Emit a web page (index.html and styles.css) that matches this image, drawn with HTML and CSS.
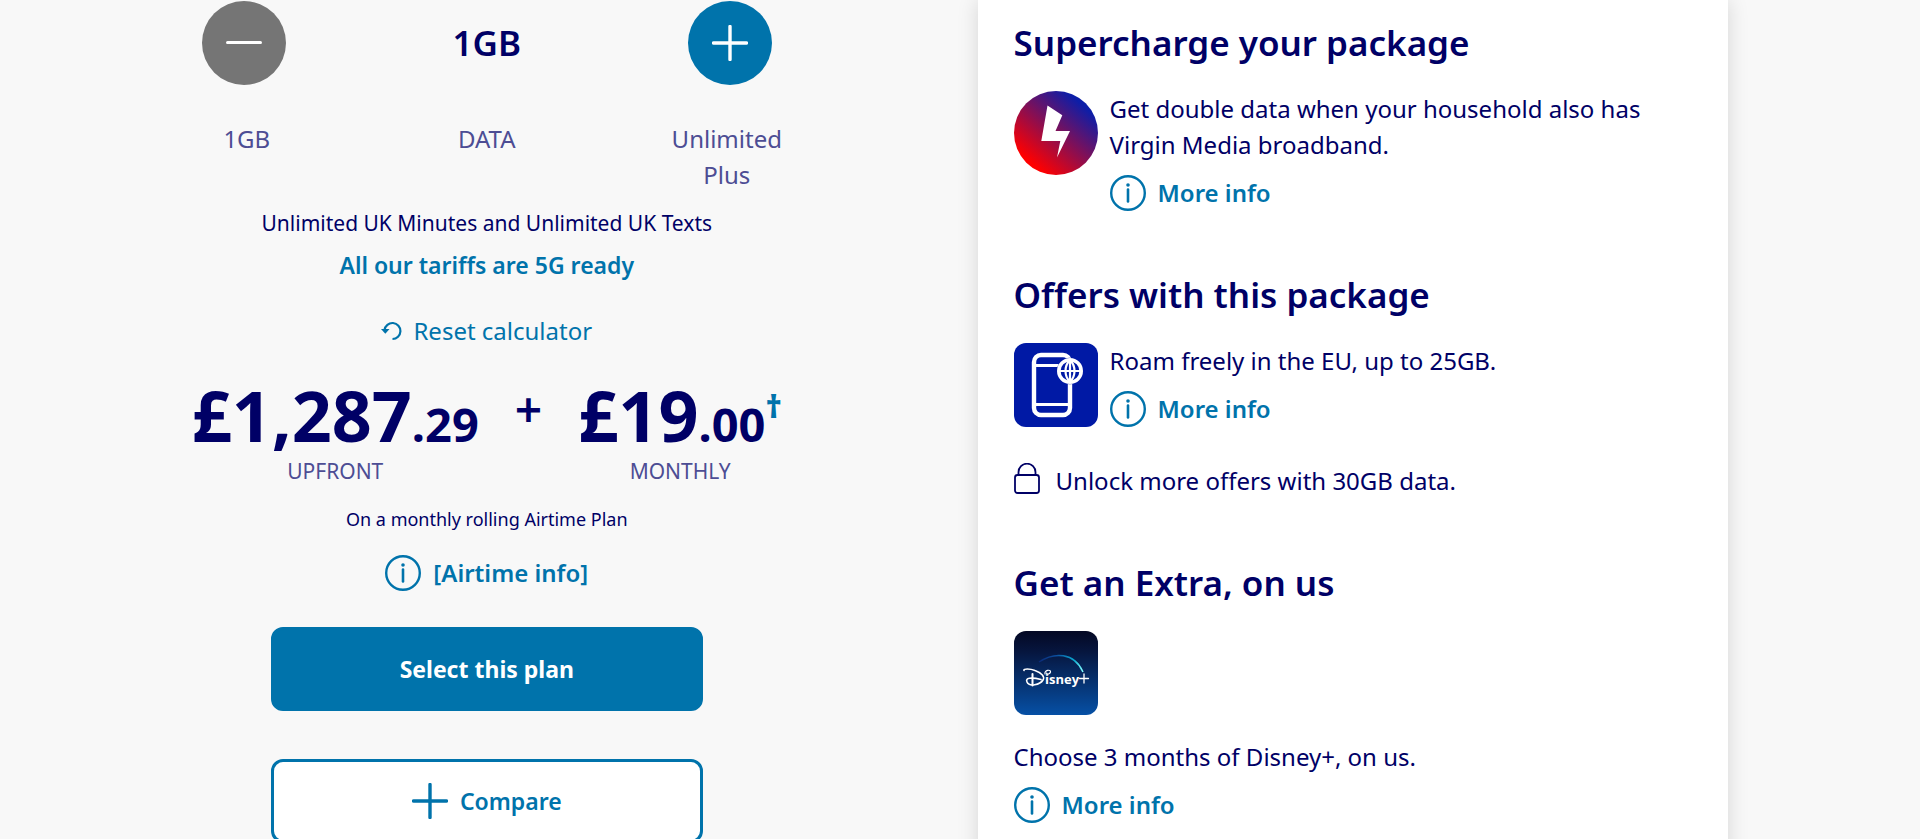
FILE: index.html
```html
<!DOCTYPE html>
<html lang="en">
<head>
<meta charset="utf-8">
<meta name="viewport" content="width=device-width, initial-scale=1">
<title>Build your plan</title>
<link rel="stylesheet" href="styles.css">
</head>
<body>
<svg class="defs" aria-hidden="true">
  <symbol id="info" viewBox="0 0 36 36">
    <circle cx="18" cy="18" r="16.8" fill="none" stroke="currentColor" stroke-width="2.4"/>
    <circle cx="18" cy="10" r="1.8" fill="currentColor"/>
    <path d="M18 14.5v12" fill="none" stroke="currentColor" stroke-width="2.6" stroke-linecap="round"/>
  </symbol>
  <symbol id="plus" viewBox="0 0 36 36">
    <path d="M18 1.5v33M1.5 18h33" fill="none" stroke="currentColor" stroke-width="3.4" stroke-linecap="round"/>
  </symbol>
  <symbol id="minus" viewBox="0 0 36 36">
    <path d="M1.5 17.5h33" fill="none" stroke="currentColor" stroke-width="3" stroke-linecap="round"/>
  </symbol>
</svg>
<main class="page">
  <section class="plan">
    <div class="stepper">
      <button class="step step-off" type="button" aria-label="Less data"><svg class="icon-md"><use href="#minus"/></svg></button>
      <strong class="amount">1GB</strong>
      <button class="step" type="button" aria-label="More data"><svg class="icon-md"><use href="#plus"/></svg></button>
    </div>
    <div class="labels"><span>1GB</span><span>DATA</span><span>Unlimited Plus</span></div>
    <p class="allowance">Unlimited UK Minutes and Unlimited UK Texts</p>
    <p class="ready">All our tariffs are 5G ready</p>
    <button class="link reset" type="button">
      <svg class="icon-reset" viewBox="0 0 22 22"><path d="M3.5 10A8 8 0 1 1 11.5 19" fill="none" stroke="currentColor" stroke-width="2.2"/><path d="M0 9h8.5l-4.2 4.8z" fill="currentColor"/></svg>
      Reset calculator
    </button>
    <div class="prices">
      <div class="price"><span class="value">£1,287<span class="pence">.29</span></span><span class="caption">UPFRONT</span></div>
      <span class="and">+</span>
      <div class="price"><span class="value">£19<span class="pence">.00</span><sup class="dagger">†</sup></span><span class="caption">MONTHLY</span></div>
    </div>
    <p class="term">On a monthly rolling Airtime Plan</p>
    <a class="link more airtime" href="#airtime"><svg class="icon-md"><use href="#info"/></svg>[Airtime info]</a>
    <button class="button primary" type="button">Select this plan</button>
    <button class="button secondary" type="button"><svg class="icon-md"><use href="#plus"/></svg>Compare</button>
  </section>
  <aside class="card">
    <section>
      <h2>Supercharge your package</h2>
      <div class="offer">
        <svg class="tile" viewBox="0 0 84 84">
          <defs><linearGradient id="volt" x1="0.2" y1="0.85" x2="0.8" y2="0.15"><stop offset="0" stop-color="#ff0000"/><stop offset="1" stop-color="#0c1ea8"/></linearGradient></defs>
          <circle cx="42" cy="42" r="42" fill="url(#volt)"/>
          <path d="M33.5 14.5L48.3 24.3L41.5 40H56L43 66.5L46.3 50H27.3Z" fill="#fff"/>
        </svg>
        <div class="details">
          <p>Get double data when your household also has Virgin Media broadband.</p>
          <a class="link more" href="#double-data"><svg class="icon-md"><use href="#info"/></svg>More info</a>
        </div>
      </div>
    </section>
    <section>
      <h2>Offers with this package</h2>
      <div class="offer">
        <svg class="tile" viewBox="0 0 84 84">
          <rect width="84" height="84" rx="12" fill="#0019a5"/>
          <g fill="none" stroke="#fff">
            <rect x="20" y="12" width="36" height="60" rx="7" stroke-width="4.4"/>
            <path d="M20 22.5h30M20 61.5h36" stroke-width="3"/>
            <circle cx="56" cy="28" r="13.2" fill="#0019a5" stroke="none"/>
            <circle cx="56" cy="28" r="11.2" stroke-width="3.6"/>
            <path d="M45 28h22M56 17v22M56 17c-6 6-6 16 0 22M56 17c6 6 6 16 0 22" stroke-width="2.2"/>
          </g>
        </svg>
        <div class="details">
          <p>Roam freely in the EU, up to 25GB.</p>
          <a class="link more" href="#roaming"><svg class="icon-md"><use href="#info"/></svg>More info</a>
        </div>
      </div>
      <p class="locked"><svg class="icon-lock" viewBox="0 0 26 32"><rect x="1" y="12" width="24" height="18" rx="2.5"/><path d="M4.500 12V9.200a8.500 8.500 0 0 1 17 0V12"/></svg>Unlock more offers with 30GB data.</p>
    </section>
    <section>
      <h2>Get an Extra, on us</h2>
      <svg class="tile" viewBox="0 0 84 84" role="img" aria-label="Disney+">
        <defs>
          <linearGradient id="night" x1="0" y1="0" x2="0" y2="1"><stop offset="0" stop-color="#040823"/><stop offset="0.25" stop-color="#06163f"/><stop offset="1" stop-color="#0650a5"/></linearGradient>
          <linearGradient id="glow" x1="0" y1="0" x2="1" y2="0"><stop offset="0" stop-color="#0a2a78"/><stop offset="0.4" stop-color="#0c4f9e"/><stop offset="0.8" stop-color="#0aa9cf"/><stop offset="1" stop-color="#8ff"/></linearGradient>
        </defs>
        <rect width="84" height="84" rx="12" fill="url(#night)"/>
        <path d="M25 31C40 21 60 21 69 41" fill="none" stroke="url(#glow)" stroke-width="1.5"/>
        <g fill="none" stroke="#fff" stroke-linecap="round" stroke-linejoin="round">
          <path d="M10 39.5C9 37.5 16 37.5 21 39.5C28 42 31 46 29 49C26 54 15 56 13 51C11 47 17 46 27 48.5" stroke-width="1.6"/>
          <path d="M18.5 43V54.5" stroke-width="2"/>
          <path d="M31 43C30 39 37 38 36.5 41C36 43 33 44 32.5 42" stroke-width="1.2"/>
          <path d="M70 43v9M65.5 47.5h9" stroke-width="1.3"/>
        </g>
        <text class="wordmark" x="31" y="53">isney</text>
      </svg>
      <p class="extra">Choose 3 months of Disney+, on us.</p>
      <a class="link more" href="#extra"><svg class="icon-md"><use href="#info"/></svg>More info</a>
    </section>
  </aside>
</main>
</body>
</html>
```
FILE: styles.css
```css
* { box-sizing: border-box; }

body {
  margin: 0;
  background: #f8f8f8;
  color: #000066;
  font: 24px/36px "Noto Sans", "Open Sans", sans-serif;
}

p, h2 { margin: 0; }

svg { display: block; flex: none; }

.defs { position: absolute; width: 0; height: 0; }

.page {
  display: grid;
  grid-template-columns: minmax(0, 590fr) minmax(0, 751fr);
  column-gap: 196px;
  padding: 0 10%;
  min-height: 100vh;
}

.plan {
  display: flex;
  flex-direction: column;
  align-items: center;
  padding-top: 1px;
  text-align: center;
}

.stepper {
  display: flex;
  justify-content: space-between;
  align-items: center;
  width: 100%;
  padding: 0 10px;
}

.step {
  display: grid;
  place-items: center;
  width: 84px;
  height: 84px;
  padding: 0;
  border: 0;
  border-radius: 50%;
  background: #0073ab;
  color: #fff;
}

.step-off { background: #757575; }

.amount { font-size: 35px; line-height: 48px; font-weight: 600; }

.icon-md { width: 36px; height: 36px; }

.labels {
  display: grid;
  grid-template-columns: repeat(3, 112px);
  column-gap: 128px;
  margin-top: 36px;
  color: #4d4d94;
}

.allowance { margin-top: 12px; font-size: 21px; }

.ready { margin-top: 6px; color: #0073ab; font-size: 23px; font-weight: 600; }

.link {
  display: flex;
  align-items: center;
  width: fit-content;
  padding: 0;
  border: 0;
  background: none;
  color: #0073ab;
  font: inherit;
  text-decoration: none;
}

.reset { gap: 10px; margin-top: 30px; }

.icon-reset { width: 22px; height: 22px; }

.more { gap: 12px; font-weight: 600; }

.prices {
  display: flex;
  justify-content: center;
  gap: 36px;
  margin-top: 30px;
}

.price { display: flex; flex-direction: column; align-items: center; gap: 2px; }

.value {
  font-size: 70px;
  line-height: 72px;
  font-weight: 700;
  white-space: nowrap;
}

.pence { font-size: 47px; line-height: 48px; }

.dagger {
  color: #0073ab;
  font-size: 32px;
  font-weight: 900;
  line-height: 0;
}

.and { font-size: 48px; line-height: 60px; font-weight: 600; }

.caption { color: #4d4d94; font-size: 21px; }

.term { margin-top: 12px; font-size: 18px; }

.airtime { margin-top: 18px; }

.button {
  display: flex;
  justify-content: center;
  align-items: center;
  gap: 12px;
  width: 432px;
  max-width: 100%;
  height: 84px;
  border: 3px solid #0073ab;
  border-radius: 12px;
  font: inherit;
  font-size: 23px;
}

.primary {
  margin-top: 36px;
  background: #0073ab;
  color: #fff;
  font-weight: 700;
}

.secondary {
  margin-top: 48px;
  background: #fff;
  color: #0073ab;
  font-weight: 600;
}

.card {
  display: flex;
  flex-direction: column;
  gap: 60px;
  padding: 19px 36px 36px;
  background: #fff;
  box-shadow: 0 0 20px rgba(0, 0, 0, 0.14);
}

h2 {
  margin-bottom: 24px;
  font-size: 35px;
  line-height: 48px;
  font-weight: 600;
}

.offer { display: flex; gap: 12px; }

.details { display: grid; gap: 12px; }

.tile { width: 84px; height: 84px; }

.locked {
  display: flex;
  align-items: flex-start;
  gap: 16px;
  margin-top: 36px;
}

.icon-lock {
  width: 26px;
  height: 32px;
  fill: none;
  stroke: currentColor;
  stroke-width: 1.8;
}

.extra { margin: 24px 0 12px; }

.wordmark {
  fill: #fff;
  font: 700 13px "Open Sans", sans-serif;
}
```
